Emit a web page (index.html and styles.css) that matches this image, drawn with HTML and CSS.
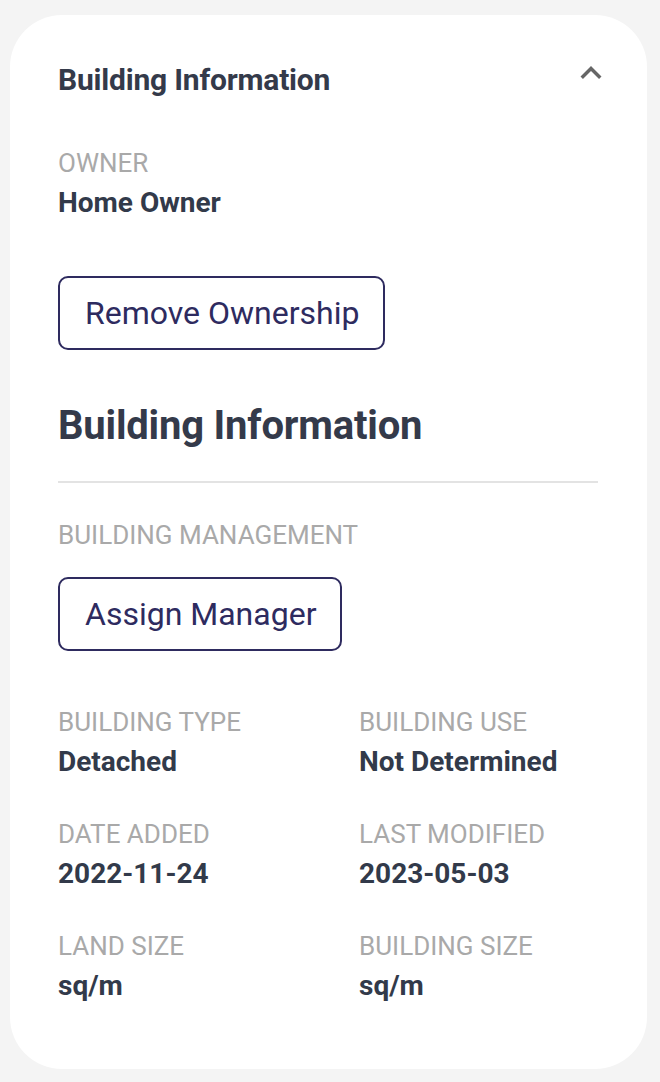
FILE: index.html
```html
<!DOCTYPE html>
<html lang="en">
<head>
<meta charset="utf-8">
<title>Building Information</title>
<link rel="stylesheet" href="styles.css">
</head>
<body>
<section class="card">
  <header class="card-header">
    <h2 class="card-title">Building Information</h2>
    <svg class="chevron" viewBox="0 0 24 24" width="42" height="42" aria-hidden="true">
      <path d="M12 8l-6 6 1.41 1.41L12 10.83l4.59 4.58L18 14z" fill="#666666"/>
    </svg>
  </header>

  <div class="field owner">
    <div class="label">OWNER</div>
    <div class="value">Home Owner</div>
  </div>

  <button class="outline-btn btn-remove" type="button">Remove Ownership</button>

  <h1 class="section-title">Building Information</h1>
  <hr class="divider">

  <div class="label">BUILDING MANAGEMENT</div>
  <button class="outline-btn btn-assign" type="button">Assign Manager</button>

  <div class="grid">
    <div class="field">
      <div class="label">BUILDING TYPE</div>
      <div class="value">Detached</div>
    </div>
    <div class="field">
      <div class="label">BUILDING USE</div>
      <div class="value">Not Determined</div>
    </div>
    <div class="field">
      <div class="label">DATE ADDED</div>
      <div class="value">2022-11-24</div>
    </div>
    <div class="field">
      <div class="label">LAST MODIFIED</div>
      <div class="value">2023-05-03</div>
    </div>
    <div class="field">
      <div class="label">LAND SIZE</div>
      <div class="value">sq/m</div>
    </div>
    <div class="field">
      <div class="label">BUILDING SIZE</div>
      <div class="value">sq/m</div>
    </div>
  </div>
</section>
</body>
</html>
```

FILE: styles.css
```css
* { box-sizing: border-box; }

html, body {
  margin: 0;
  padding: 0;
  background: #f4f4f4;
}

body {
  padding: 15px 13px 13px 10px;
  font-family: Roboto, "Liberation Sans", Arial, sans-serif;
}

.card {
  background: #ffffff;
  border-radius: 52px;
  padding: 45px 49px 61px 48px;
  height: 1054px;
}

.card-header {
  display: flex;
  justify-content: space-between;
  align-items: flex-start;
}

.card-title {
  margin: 0;
  font-size: 30px;
  line-height: 40px;
  font-weight: 700;
  color: #343a4a;
  letter-spacing: -0.2px;
}

.chevron {
  display: block;
  margin-top: -8px;
  margin-right: -14px;
}

.label {
  font-size: 26px;
  line-height: 36px;
  color: #a9a9a9;
  font-weight: 400;
}

.value {
  margin-top: 2px;
  font-size: 28px;
  line-height: 40px;
  font-weight: 700;
  color: #323a4a;
}

.owner {
  margin-top: 45px;
}

.outline-btn {
  display: inline-flex;
  align-items: center;
  height: 74px;
  padding: 0 24px 0 25px;
  border: 2px solid #2e2b5f;
  border-radius: 10px;
  background: #ffffff;
  color: #2e2b5f;
  font-family: Roboto, "Liberation Sans", Arial, sans-serif;
  font-size: 32px;
  font-weight: 400;
  cursor: pointer;
}

.btn-remove {
  margin-top: 53px;
}

.section-title {
  margin: 52px 0 0 0;
  font-size: 40px;
  line-height: 48px;
  font-weight: 700;
  color: #343a4a;
  letter-spacing: -0.2px;
}

.divider {
  margin: 31px 0 0 0;
  border: 0;
  height: 2px;
  background: #e3e3e3;
}

.divider + .label {
  margin-top: 34px;
}

.btn-assign {
  margin-top: 24px;
}

.grid {
  margin-top: 53px;
  display: grid;
  grid-template-columns: 301px 1fr;
  row-gap: 34px;
}
```
